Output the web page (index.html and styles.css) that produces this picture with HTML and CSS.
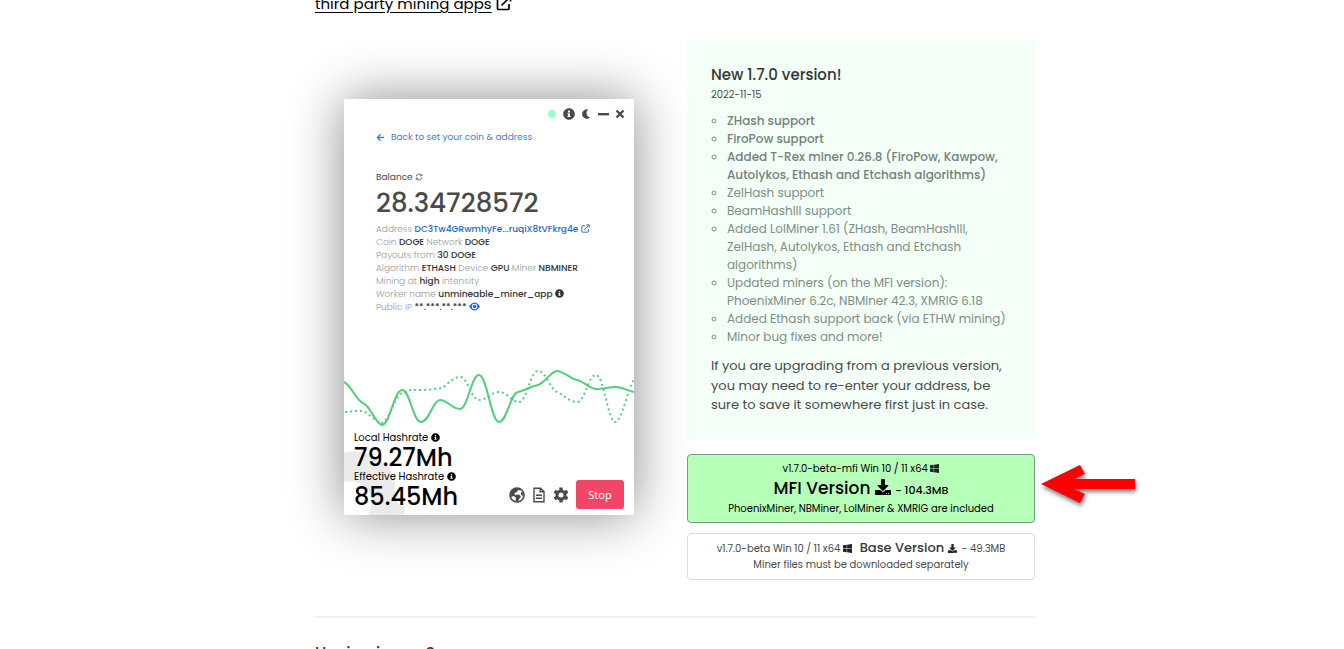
FILE: index.html
```html
<!DOCTYPE html>
<html lang="en">
<head>
<meta charset="utf-8">
<title>Miner download</title>
<meta name="viewport" content="width=device-width, initial-scale=1">
<link rel="stylesheet" href="styles.css">
</head>
<body>
<svg class="sprite" aria-hidden="true">
  <symbol id="info" viewBox="0 0 512 512"><path d="M256 8C119 8 8 119 8 256s111 248 248 248 248-111 248-248S393 8 256 8zm0 100c28 0 46 20 46 46s-18 46-46 46-46-20-46-46 18-46 46-46zm64 280H192v-52h24v-64h-24v-50h104v114h24z"/></symbol>
  <symbol id="windows" viewBox="0 0 448 448"><path d="M0 62 183 37v176H0zm0 324 183 25V237H0zm204 28 244 34V237H204zm0-380v179h244V0z"/></symbol>
  <symbol id="download" viewBox="0 0 512 512"><path d="M216 0h80c13 0 24 11 24 24v168h88c18 0 27 22 14 34L270 378c-8 8-20 8-28 0L90 226c-13-12-4-34 14-34h88V24c0-13 11-24 24-24zm296 376v112c0 13-11 24-24 24H24c-13 0-24-11-24-24V376c0-13 11-24 24-24h147l49 49c20 20 52 20 72 0l49-49h147c13 0 24 11 24 24zM388 464a20 20 0 1 0-40 0 20 20 0 0 0 40 0zm64 0a20 20 0 1 0-40 0 20 20 0 0 0 40 0z"/></symbol>
  <symbol id="external" viewBox="0 0 16 16"><path d="M7 3H2.500Q1.500 3 1.500 4v9.500q0 1 1 1H12q1 0 1-1V9M5.500 10.500 14 2M9.500 1.500H14.500V6.500" fill="none" stroke="currentColor" stroke-width="1.700"/></symbol>
</svg>
<main class="page">
  <p class="lead"><a href="#apps">third party mining apps</a> <svg class="icon-lead"><use href="#external"/></svg></p>

  <section class="release">
    <div class="app">
      <svg class="watermark" viewBox="0 0 60 66"><path d="M0 4C20-2 50 10 51 36V50c2 4 6 7 11 9l-3 7H24C28 58 29 50 24 42 18 34 8 30 0 33z"/></svg>
      <div class="titlebar">
        <span class="status"></span>
        <svg class="icon-bar"><use href="#info"/></svg>
        <svg class="icon-bar" viewBox="0 0 12 12"><path d="M8 1.500A4.700 4.700 0 1 0 10 9.500 4.800 4.800 0 0 1 8 1.500z"/></svg>
        <svg class="icon-bar" viewBox="0 0 12 12"><path d="M1 5h11v2.400H1z"/></svg>
        <svg class="icon-bar" viewBox="0 0 12 12"><path d="m2.500 2.500 7 7m0-7-7 7" stroke="currentColor" stroke-width="2.400"/></svg>
      </div>
      <div class="details">
        <a class="back" href="#back"><svg class="icon-back" viewBox="0 0 10 10"><path d="M9 5H2M5 1.500 1.500 5 5 8.500" fill="none" stroke="currentColor" stroke-width="1.500"/></svg>Back to set your coin &amp; address</a>
        <div class="balance-label">Balance <svg class="icon-refresh" viewBox="0 0 10 10"><path d="M1.500 4.500A3.500 3.500 0 0 1 8 3M8.500 5.500A3.500 3.500 0 0 1 2 7M8.500 1v2.500H6M1.500 9V6.500H4" fill="none" stroke="currentColor"/></svg></div>
        <div class="balance">28.34728572</div>
        <div class="row">Address <a href="#address">DC3Tw4GRwmhyFe...ruqiX8tVFkrg4e <svg class="icon-row"><use href="#external"/></svg></a></div>
        <div class="row">Coin <b>DOGE</b> Network <b>DOGE</b></div>
        <div class="row">Payouts from <b>30 DOGE</b></div>
        <div class="row">Algorithm <b>ETHASH</b> Device <b>GPU</b> Miner <b>NBMINER</b></div>
        <div class="row">Mining at <b>high</b> intensity</div>
        <div class="row">Worker name <b>unmineable_miner_app <svg class="icon-row"><use href="#info"/></svg></b></div>
        <div class="row">Public IP <b>**.***.**.***</b> <svg class="icon-eye" viewBox="0 0 18 14"><path d="M0 7q9-13 18 0-9 13-18 0z"/><circle cx="9" cy="7" r="4.500" fill="#fff"/><circle cx="9" cy="7" r="2.800"/></svg></div>
      </div>
      <svg class="chart" viewBox="0 0 290 70">
        <path d="M0 17C8 21 12 36 19 38S32 60 38 60C46 60 50 25 58 25S69 57 77 57 89 35 96 35 108 44 116 44C124 44 127 10 135 10S147 57 155 57 166 29 174 27 188 21 194 20 207 6 213 6 227 14 233 15 246 24 252 24s14-2 20-2 12 4 18 5"/>
        <path stroke-dasharray="2 3" d="M1 47C8 46 13 46 18 46S32 58 38 58 50 32 58 28 70 25 77 25 92 24 97 23 108 12 116 12 127 35 135 35 147 27 155 27 168 37 175 37C183 37 186 6 194 6S206 24 213 27 225 37 233 37 244 10 252 10 264 57 271 57 284 22 290 15"/>
      </svg>
      <div class="bottom">
        <div class="rates">
          <div class="rate-label">Local Hashrate <svg class="icon-row"><use href="#info"/></svg></div>
          <div class="rate">79.27Mh</div>
          <div class="rate-label">Effective Hashrate <svg class="icon-row"><use href="#info"/></svg></div>
          <div class="rate">85.45Mh</div>
        </div>
        <div class="tools">
          <svg viewBox="0 0 16 16"><circle cx="8" cy="8" r="7" fill="none" stroke="currentColor" stroke-width="1.600"/><path d="M1.500 8 2.500 3.500 6 1l5 .5 1 2-3-.5-1 2-2.500 1L6 8l4-.5 2 2-1.500 2L9 14.500 6.500 14l.5-3-2-2-3 1zM12 5l2.500.5V9L12 8z"/></svg>
          <svg viewBox="0 0 16 16"><path d="M3 1.200h6.500L13 4.500v10.300H3zM9.200 1.500v3.300H13M5 8.200h6M5 11.200h6" fill="none" stroke="currentColor" stroke-width="1.400"/></svg>
          <svg viewBox="0 0 16 16"><circle cx="8" cy="8" r="4" fill="none" stroke="currentColor" stroke-width="3"/><path d="M8 .5v3M8 12.500v3M1.500 4.250l2.600 1.500M11.900 10.250l2.600 1.500M1.500 11.750l2.600-1.500M11.900 5.750l2.600-1.500" stroke="currentColor" stroke-width="3.400"/></svg>
          <button class="stop" type="button">Stop</button>
        </div>
      </div>
    </div>

    <div class="info">
      <div class="notes">
        <h2>New 1.7.0 version!</h2>
        <div class="date">2022-11-15</div>
        <ul>
          <li><b>ZHash support</b></li>
          <li><b>FiroPow support</b></li>
          <li><b>Added T-Rex miner 0.26.8 (FiroPow, Kawpow, Autolykos, Ethash and Etchash algorithms)</b></li>
          <li>ZelHash support</li>
          <li>BeamHashIII support</li>
          <li>Added LolMiner 1.61 (ZHash, BeamHashIII, ZelHash, Autolykos, Ethash and Etchash algorithms)</li>
          <li>Updated miners (on the MFI version): PhoenixMiner 6.2c, NBMiner 42.3, XMRIG 6.18</li>
          <li>Added Ethash support back (via ETHW mining)</li>
          <li>Minor bug fixes and more!</li>
        </ul>
        <p>If you are upgrading from a previous version, you may need to re-enter your address, be sure to save it somewhere first just in case.</p>
      </div>
      <div class="primary-wrap">
        <a class="download primary" href="#mfi">
          <span>v1.7.0-beta-mfi Win 10 / 11 x64 <svg class="icon-win"><use href="#windows"/></svg></span>
          <strong>MFI Version <svg class="icon-dl"><use href="#download"/></svg> <small>- 104.3MB</small></strong>
          <span>PhoenixMiner, NBMiner, LolMiner &amp; XMRIG are included</span>
        </a>
        <svg class="arrow" viewBox="0 0 100 50"><path d="M0 24 39 5l5 9-11 5h61v10H33l11 5-5 9z"/></svg>
      </div>
      <a class="download base" href="#base">
        <span>v1.7.0-beta Win 10 / 11 x64 <svg class="icon-win"><use href="#windows"/></svg> <strong>Base Version <svg class="icon-win"><use href="#download"/></svg></strong>&nbsp; - 49.3MB</span>
        <span>Miner files must be downloaded separately</span>
      </a>
    </div>
  </section>
  <hr>
  <h3>Having issues?</h3>
</main>
</body>
</html>
```
FILE: styles.css
```css
* { box-sizing: border-box; }
body { margin: 0; height: 100vh; overflow: hidden; background: #fff; color: #4a4a4a; font-family: Poppins, Inter, sans-serif; }
svg { fill: currentColor; }
a { color: inherit; text-decoration: none; }
.sprite { display: none; }
.page { max-width: 726px; margin: 0 auto; padding-left: 6px; }
.lead { margin: -8px 0 0; height: 47px; font-size: 15px; line-height: 24px; color: #000; }
.lead a { text-decoration: underline; text-underline-offset: 3px; }
.icon-lead { width: 16px; height: 16px; vertical-align: -2px; }

.release { display: grid; grid-template-columns: 1fr 1fr; gap: 24px; align-items: start; }
.app { position: relative; display: flex; flex-direction: column; width: 290px; margin: 60px auto 0; background: #fff; box-shadow: 0 0 50px rgba(0, 0, 0, .46); }
.watermark { position: absolute; left: 0; bottom: 0; width: 60px; height: 66px; color: #ebebeb; }
.titlebar { display: flex; justify-content: flex-end; align-items: center; gap: 5px; padding: 9px 8px 0 0; height: 21px; }
.status { width: 8px; height: 8px; margin-right: 2px; border-radius: 50%; background: #97ffc9; }
.icon-bar { width: 12px; height: 12px; }
.details { padding: 11px 32px 0; font-size: 9px; line-height: 13px; }
.back { display: flex; align-items: center; gap: 6px; color: #4b7dcc; }
.icon-back { width: 9px; height: 9px; }
.balance-label { margin-top: 27px; }
.icon-refresh { width: 8px; height: 8px; vertical-align: -1px; }
.balance { font-size: 26px; line-height: 39px; font-weight: 500; }
.row { font-weight: 300; color: #999; white-space: nowrap; }
.row b { font-weight: 500; color: #333; }
.row a { font-weight: 500; color: #2769cb; }
.icon-row { width: 9px; height: 9px; vertical-align: -1px; }
.icon-eye { width: 11px; height: 9px; vertical-align: -1px; color: #2769cb; }
.chart { width: 100%; margin-top: 51px; fill: none; stroke: #52cf7e; stroke-width: 2px; }
.bottom { position: relative; display: flex; justify-content: space-between; align-items: flex-end; padding: 0 10px 6px; margin-top: -4px; color: #000; }
.rate-label { font-size: 10px; line-height: 14px; }
.rate { font-size: 24px; line-height: 25px; font-weight: 500; }
.tools { display: flex; align-items: center; gap: 6px; color: #4a4a4a; }
.tools svg { width: 16px; height: 16px; }
.stop { width: 48px; height: 29px; margin-left: 1px; border: 0; border-radius: 3px; background: #f14668; color: #fff; font: 11px "Noto Sans", sans-serif; }

.info { display: flex; flex-direction: column; }
.notes { padding: 24px; background: #f4fff8; }
.notes h2 { margin: 0; font-size: 15px; line-height: 24px; font-weight: 500; color: #363636; }
.date { font-size: 10px; line-height: 15px; }
.notes ul { margin: 10px 0; padding-left: 16px; list-style: circle; font-size: 12px; line-height: 18px; color: #7e8e84; }
.notes b { font-weight: 500; color: #728278; }
.notes p { margin: 0; font-size: 13px; line-height: 1.5; }
.primary-wrap { position: relative; margin: 15px 0 10px; }
.arrow { position: absolute; left: 100%; top: 6px; width: 100px; margin-left: 6px; color: #f00; filter: drop-shadow(1px 3px 2px rgba(0, 0, 0, .5)); }
.download { display: flex; flex-direction: column; align-items: center; border: 1px solid #dbdbdb; border-radius: 4px; font-size: 10px; line-height: 16px; }
.primary { padding: 6px 5px 5px; border-color: #759d82; background: #b5ffb8; color: #000; }
.primary strong { font-size: 17px; line-height: 22px; font-weight: 500; }
.primary small { font-size: 11px; }
.base { padding: 6px; }
.base strong { margin-left: 5px; font-size: 13px; font-weight: 500; color: #363636; }
.icon-win { width: 9px; height: 9px; vertical-align: -1px; color: #222; }
.icon-dl { width: 16px; height: 16px; vertical-align: -1px; }
hr { height: 2px; margin: 36px 0 23px; border: 0; background: #f3f3f3; }
h3 { margin: 0; font-size: 16px; line-height: 24px; font-weight: 500; color: #363636; }
```
